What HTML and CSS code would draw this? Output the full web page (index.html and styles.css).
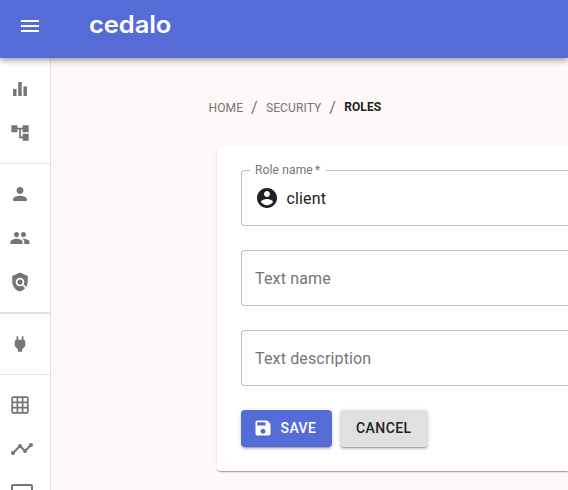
FILE: index.html
```html
<!DOCTYPE html>
<html lang="en">
<head>
<meta charset="utf-8">
<title>Roles</title>
<link rel="stylesheet" href="styles.css">
</head>
<body>
<header class="appbar">
  <svg class="menu" viewBox="0 0 24 24"><path d="M3 18h18v-2H3v2zm0-5h18v-2H3v2zm0-7v2h18V6H3z"/></svg>
  <span class="logo">cedalo</span>
</header>
<div class="shell">
  <nav class="drawer">
    <div class="group">
      <a class="item"><svg viewBox="-.7 -.7 25.4 25.4"><path d="M10 20h4V4h-4v16zm-6 0h4v-8H4v8zM16 9v11h4V9h-4z"/></svg></a>
      <a class="item"><svg viewBox="-.7 -.7 25.4 25.4"><path d="M22 11V3h-7v3H9V3H2v8h7V8h2v10h4v3h7v-8h-7v3h-2V8h2v3z"/></svg></a>
    </div>
    <div class="group">
      <a class="item"><svg viewBox="-.7 -.7 25.4 25.4"><path d="M12 12c2.210 0 4-1.790 4-4s-1.790-4-4-4-4 1.790-4 4 1.790 4 4 4zm0 2c-2.670 0-8 1.340-8 4v2h16v-2c0-2.660-5.330-4-8-4z"/></svg></a>
      <a class="item"><svg viewBox="-.7 -.7 25.4 25.4"><path d="M16 11c1.660 0 2.990-1.340 2.990-3S17.660 5 16 5s-3 1.340-3 3 1.340 3 3 3zm-8 0c1.660 0 2.990-1.340 2.990-3S9.660 5 8 5 5 6.340 5 8s1.340 3 3 3zm0 2c-2.330 0-7 1.170-7 3.500V19h14v-2.500c0-2.330-4.670-3.500-7-3.500zm8 0c-.29 0-.62.02-.97.05 1.160.84 1.970 1.970 1.970 3.450V19h6v-2.500c0-2.330-4.670-3.500-7-3.500z"/></svg></a>
      <a class="item"><svg viewBox="-.7 -.7 25.4 25.4"><path d="M21 5l-9-4-9 4v6c0 5.550 3.840 10.740 9 12 2.300-.56 4.330-1.900 5.880-3.710l-3.120-3.120c-1.940 1.290-4.580 1.070-6.290-.64-1.950-1.950-1.950-5.120 0-7.070 1.950-1.950 5.120-1.950 7.070 0 1.710 1.710 1.920 4.350.64 6.290l2.900 2.900C20.290 15.690 21 13.380 21 11V5z"/><circle cx="12" cy="12" r="3"/></svg></a>
    </div>
    <div class="group thick">
      <a class="item"><svg viewBox="-.7 -.7 25.4 25.4"><path d="M16.010 7L16 3h-2v4h-4V3H8v4h-.01C7 6.990 6 7.990 6 8.990v5.490L9.500 18v3h5v-3l3.500-3.510v-5.500c0-1-1-2-1.990-1.990z"/></svg></a>
    </div>
    <div class="group">
      <a class="item"><svg viewBox="-.7 -.7 25.4 25.4"><path fill-rule="evenodd" d="M4 2h16a2 2 0 0 1 2 2v16a2 2 0 0 1-2 2H4a2 2 0 0 1-2-2V4a2 2 0 0 1 2-2zM4 4v4h4V4zm6 0v4h4V4zm6 0v4h4V4zM4 10v4h4v-4zm6 0v4h4v-4zm6 0v4h4v-4zM4 16v4h4v-4zm6 0v4h4v-4zm6 0v4h4v-4z"/></svg></a>
      <a class="item wide"><svg viewBox="0 0 24 24"><path d="M23 8c0 1.100-.9 2-2 2-.18 0-.35-.02-.51-.07l-3.560 3.550c.05.16.07.34.07.52 0 1.100-.9 2-2 2s-2-.9-2-2c0-.18.02-.36.07-.52l-2.550-2.550c-.16.05-.34.07-.52.07s-.36-.02-.52-.07l-4.550 4.560c.05.16.07.33.07.51 0 1.100-.9 2-2 2s-2-.9-2-2 .9-2 2-2c.18 0 .35.02.51.07l4.560-4.550C8.020 9.360 8 9.180 8 9c0-1.100.9-2 2-2s2 .9 2 2c0 .18-.02.36-.07.52l2.550 2.550c.16-.05.34-.07.52-.07s.36.02.52.07l3.550-3.560C19.020 8.350 19 8.180 19 8c0-1.100.9-2 2-2s2 .9 2 2z"/></svg></a>
      <a class="item wide"><svg viewBox="0 0 24 24"><path d="M21 3H3c-1.100 0-2 .9-2 2v12c0 1.100.9 2 2 2h5v2h8v-2h5c1.100 0 2-.9 2-2V5c0-1.100-.9-2-2-2zm0 14H3V5h18v12z"/></svg></a>
    </div>
  </nav>
  <main class="content">
    <div class="crumbs">
      <a>HOME</a><span class="sep">/</span><a>SECURITY</a><span class="sep">/</span><b>ROLES</b>
    </div>
    <section class="card">
      <div class="field">
        <span class="label">Role name<span class="star">*</span></span>
        <svg viewBox="0 0 24 24"><path d="M12 2C6.480 2 2 6.480 2 12s4.480 10 10 10 10-4.480 10-10S17.520 2 12 2zm0 3c1.660 0 3 1.340 3 3s-1.340 3-3 3-3-1.340-3-3 1.340-3 3-3zm0 14.200c-2.500 0-4.710-1.280-6-3.220.03-1.990 4-3.080 6-3.080 1.990 0 5.970 1.090 6 3.080-1.290 1.940-3.500 3.220-6 3.220z"/></svg>
        <span class="value">client</span>
      </div>
      <div class="field"><span class="hint">Text name</span></div>
      <div class="field"><span class="hint">Text description</span></div>
      <div class="actions">
        <button class="btn primary"><svg viewBox="0 0 24 24"><path d="M17 3H5c-1.110 0-2 .9-2 2v14c0 1.100.89 2 2 2h14c1.100 0 2-.9 2-2V7l-4-4zm-5 16c-1.660 0-3-1.340-3-3s1.340-3 3-3 3 1.340 3 3-1.340 3-3 3zm3-10H5V5h10v4z"/></svg>SAVE</button>
        <button class="btn">CANCEL</button>
      </div>
    </section>
  </main>
</div>
</body>
</html>
```
FILE: styles.css
```css
* { box-sizing: border-box; }
body {
  margin: 0;
  height: 490px;
  overflow: hidden;
  background: #fff8f8;
  font-family: Roboto, sans-serif;
  color: #212121;
}
svg { display: block; fill: currentColor; flex: none; }
.appbar {
  position: relative;
  z-index: 2;
  display: flex;
  align-items: center;
  height: 58px;
  padding: 0 0 6px 18px;
  background: #556cd6;
  color: #fff;
  box-shadow: 0 2px 4px -1px rgba(0,0,0,.2), 0 4px 5px rgba(0,0,0,.14), 0 1px 10px rgba(0,0,0,.12);
}
.menu { width: 24px; height: 24px; }
.logo {
  margin-left: 47px;
  padding-bottom: 2px;
  font: 600 24px/28px Inter, sans-serif;
  letter-spacing: -.1px;
  transform: scaleX(1.065);
  transform-origin: left;
}
.shell { display: flex; height: 432px; }
.drawer {
  width: 51px;
  flex: none;
  padding-top: 1px;
  overflow: hidden;
  background: #fff;
  border-right: 1px solid #e0e0e0;
  color: #757575;
}
.group { padding: 8px 0; }
.group + .group { border-top: 1px solid #e0e0e0; }
.group + .thick { border-top-width: 2px; }
.item { display: flex; align-items: center; justify-content: center; width: 40px; height: 44px; }
.item svg { width: 22px; height: 22px; }
.wide { width: 44px; }
.wide svg { width: 24px; height: 24px; }
.content { flex: 1; min-width: 0; padding: 38px 0 0 157.5px; }
.crumbs {
  display: flex;
  align-items: center;
  height: 22px;
  font-size: 12px;
  color: #757575;
}
.crumbs a { padding-top: 1px; letter-spacing: .12px; }
.sep { margin: 0 8px; font-size: 16px; letter-spacing: .2px; }
.crumbs b { font-weight: 700; color: #212121; letter-spacing: .1px; }
.card {
  height: 325px;
  margin: 28px 0 0 8.5px;
  padding: 24px 0 24px 24px;
  background: #fff;
  border-radius: 4px 0 0 4px;
  box-shadow: 0 2px 1px -1px rgba(0,0,0,.2), 0 1px 1px rgba(0,0,0,.14), 0 1px 3px rgba(0,0,0,.12);
}
.field {
  position: relative;
  display: flex;
  align-items: center;
  height: 56px;
  margin-bottom: 24px;
  padding-left: 13px;
  border: 1px solid #bdbdbd;
  border-right: 0;
  border-radius: 4px 0 0 4px;
  font-size: 16px;
  letter-spacing: .15px;
}
.field svg { width: 24px; height: 24px; }
.value { margin-left: 7.5px; }
.hint { color: #757575; }
.label {
  position: absolute;
  top: -8px;
  left: 8px;
  padding: 0 6px 0 5px;
  background: #fff;
  font-size: 12px;
  line-height: 14px;
  color: #757575;
}
.star { margin-left: 2px; }
.actions { display: flex; gap: 8px; }
.btn {
  display: flex;
  align-items: center;
  height: 37px;
  padding: 0 16.5px 1px 16px;
  border: 0;
  border-radius: 4px;
  background: #e0e0e0;
  color: #212121;
  font: 500 14px/24px Roboto, sans-serif;
  letter-spacing: .43px;
  box-shadow: 0 3px 1px -2px rgba(0,0,0,.2), 0 2px 2px rgba(0,0,0,.14), 0 1px 5px rgba(0,0,0,.12);
}
.primary { width: 91px; background: #556cd6; color: #fff; padding-left: 12px; }
.btn svg { width: 20px; height: 20px; margin-right: 7.5px; }
```
